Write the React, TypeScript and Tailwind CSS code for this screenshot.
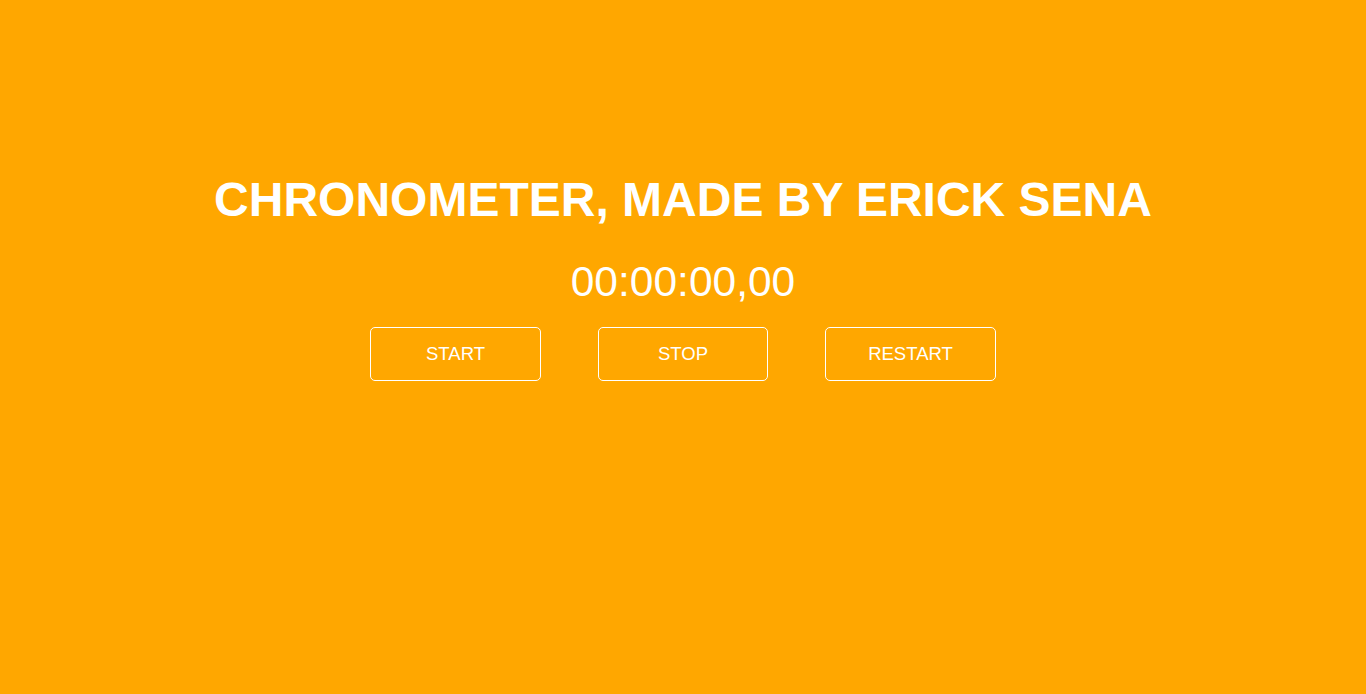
export default function App() {
  const buttons = ["START", "STOP", "RESTART"];

  return (
    <div className="min-h-[694px] w-full bg-[#ffa700] font-['Liberation_Sans',Arial,sans-serif] text-white">
      <div className="flex flex-col items-center pt-[172px]">
        {/* Title */}
        <h1 className="text-[48px] font-bold leading-[55px]">
          CHRONOMETER, MADE BY ERICK SENA
        </h1>

        {/* Time display */}
        <div className="mt-[31px] text-[42.5px] leading-[48px]">00:00:00,00</div>

        {/* Controls */}
        <div className="mt-[21px] flex gap-[57px]">
          {buttons.map((label) => (
            <button
              key={label}
              className="flex h-[54px] w-[170.5px] items-center justify-center rounded-[5px] border border-white text-[18.5px]"
            >
              {label}
            </button>
          ))}
        </div>
      </div>
    </div>
  );
}
